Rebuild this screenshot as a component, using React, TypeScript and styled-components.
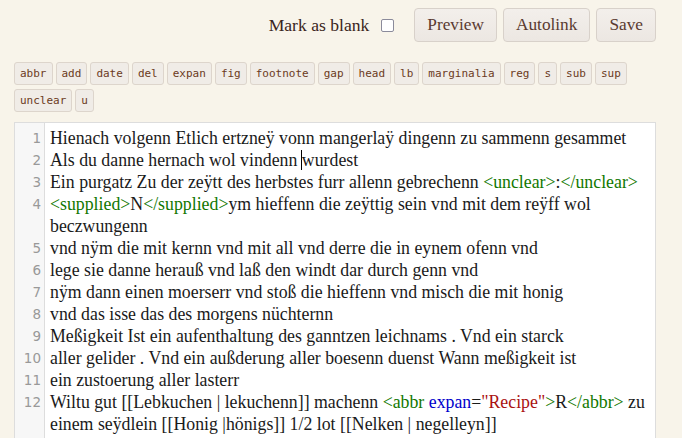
import React from "react";
import styled, { createGlobalStyle } from "styled-components";

const Global = createGlobalStyle`
  html, body { margin: 0; padding: 0; background: #f8f4ea; }
  body { font-family: "Liberation Serif", serif; color: #3a2520; overflow: hidden; }
`;

const Page = styled.div`
  padding: 8px 26px 0 14px;
  display: flex;
  flex-direction: column;
`;

const TopBar = styled.div`
  display: flex;
  justify-content: flex-end;
  align-items: center;
  gap: 6px;
  height: 34px;
`;

const BlankLabel = styled.label`
  display: flex;
  align-items: center;
  font-size: 17.6px;
  color: #3a2420;
  margin-right: 14px;
`;

const Check = styled.span`
  display: inline-block;
  width: 11px;
  height: 11px;
  border: 1.5px solid #8b8b9b;
  border-radius: 2px;
  background: #fff;
  margin-left: 12px;
`;

const Button = styled.button`
  height: 34px;
  padding: 0 12px;
  font-family: "Liberation Serif", serif;
  font-size: 17.3px;
  color: #5a3a30;
  background: linear-gradient(#f3efeb, #ece7e2);
  border: 1px solid #d8d1ca;
  border-radius: 4px;
`;

const Tags = styled.div`
  display: flex;
  flex-wrap: wrap;
  gap: 4px 3px;
  margin-top: 20px;
`;

const Tag = styled.span`
  display: inline-flex;
  align-items: center;
  height: 21px;
  padding: 0 5px;
  font-family: "DejaVu Sans Mono", monospace;
  font-size: 11px;
  color: #6b3a22;
  background: #f0ece7;
  border: 1px solid #ddd5cc;
  border-radius: 3px;
`;

const Editor = styled.div`
  margin-top: 10px;
  background: #fff;
  border: 1px solid #ddd;
  border-bottom: none;
  display: flex;
  flex-direction: column;
  padding-bottom: 20px;
  background-image: linear-gradient(to right, #f7f7f7 29px, #ddd 29px, #ddd 30px, transparent 30px);
  padding-top: 4px;
`;

const Row = styled.div`
  display: grid;
  grid-template-columns: 30px 1fr;
  line-height: 22px;
`;

const Num = styled.span`
  text-align: right;
  padding-right: 4px;
  font-family: "DejaVu Sans", sans-serif;
  font-size: 13.5px;
  color: #999;
`;

const Code = styled.span`
  padding-left: 5px;
  font-size: 17.8px;
  color: #1a1a1a;
  white-space: nowrap;
`;

const T = styled.span<{ $k: "tag" | "attr" | "str" }>`
  color: ${(p) => (p.$k === "tag" ? "#117700" : p.$k === "attr" ? "#0000cc" : "#aa1111")};
`;

const Cursor = styled.span`
  border-left: 1px solid #000;
  margin-left: -1px;
`;

const tags = [
  "abbr", "add", "date", "del", "expan", "fig", "footnote", "gap", "head", "lb",
  "marginalia", "reg", "s", "sub", "sup", "unclear", "u",
];

type L = { n?: number; c: React.ReactNode };

const lines: L[] = [
  { n: 1, c: "Hienach volgenn Etlich ertzneÿ vonn mangerlaÿ dingenn zu sammenn gesammet" },
  { n: 2, c: <>Als du danne hernach wol vindenn <Cursor />wurdest</> },
  { n: 3, c: <>Ein purgatz Zu der zeÿtt des herbstes furr allenn gebrechenn <T $k="tag">&lt;unclear&gt;</T>:<T $k="tag">&lt;/unclear&gt;</T></> },
  { n: 4, c: <><T $k="tag">&lt;supplied&gt;</T>N<T $k="tag">&lt;/supplied&gt;</T>ym hieffenn die zeÿttig sein vnd mit dem reÿff wol</> },
  { c: "beczwungenn" },
  { n: 5, c: "vnd nÿm die mit kernn vnd mit all vnd derre die in eynem ofenn vnd" },
  { n: 6, c: "lege sie danne herauß vnd laß den windt dar durch genn vnd" },
  { n: 7, c: "nÿm dann einen moerserr vnd stoß die hieffenn vnd misch die mit honig" },
  { n: 8, c: "vnd das isse das des morgens nüchternn" },
  { n: 9, c: "Meßigkeit Ist ein aufenthaltung des ganntzen leichnams . Vnd ein starck" },
  { n: 10, c: "aller gelider . Vnd ein außderung aller boesenn duenst Wann meßigkeit ist" },
  { n: 11, c: "ein zustoerung aller lasterr" },
  { n: 12, c: <>Wiltu gut [[Lebkuchen | lekuchenn]] machenn <T $k="tag">&lt;abbr</T> <T $k="attr">expan</T>=<T $k="str">"Recipe"</T><T $k="tag">&gt;</T>R<T $k="tag">&lt;/abbr&gt;</T> zu</> },
  { c: "einem seÿdlein [[Honig |hönigs]] 1/2 lot [[Nelken | negelleyn]]" },
];

export default function App() {
  return (
    <>
      <Global />
      <Page>
        <TopBar>
          <BlankLabel>
            Mark as blank
            <Check />
          </BlankLabel>
          <Button>Preview</Button>
          <Button>Autolink</Button>
          <Button>Save</Button>
        </TopBar>
        <Tags>
          {tags.map((t) => (
            <Tag key={t}>{t}</Tag>
          ))}
        </Tags>
        <Editor>
          {lines.map((l, i) => (
            <Row key={i}>
              <Num>{l.n ?? ""}</Num>
              <Code>{l.c}</Code>
            </Row>
          ))}
        </Editor>
      </Page>
    </>
  );
}
